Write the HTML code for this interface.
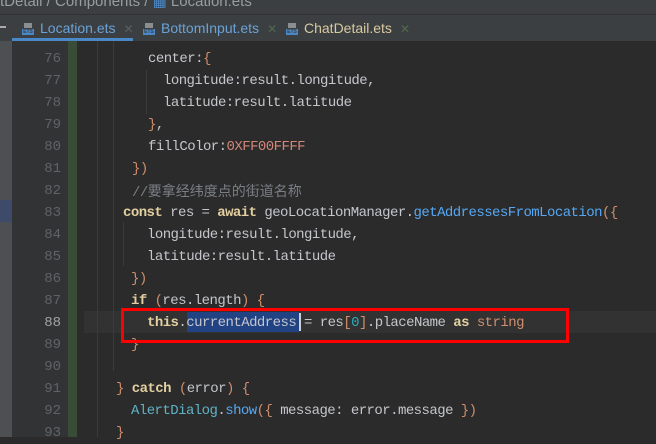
<!DOCTYPE html><html><head><meta charset="utf-8"><style>
body{margin:0;width:656px;height:437px;overflow:hidden;background:#2b2b2b;position:relative;font-family:"Liberation Sans",sans-serif}
.abs{position:absolute}
.crumb{left:0;top:0;width:656px;height:14px;background:#3c3f41;border-bottom:1px solid #323232;color:#9a9da0;font-size:15px;line-height:4px;white-space:nowrap;overflow:hidden}
.tabs{left:0;top:15px;width:656px;height:26px;background:#3c3f41}
.tab{top:0;height:26px;font-size:14px;line-height:27px;white-space:nowrap}
.ic{display:inline-block;width:12px;height:12px;vertical-align:-2px;margin-right:6px;position:relative}
.ic:before{content:"";position:absolute;left:2px;top:0;width:8px;height:5px;background:#8a8e91}
.ic:after{content:"ETS";position:absolute;left:0;top:6px;font-size:5px;line-height:6px;color:#3c3f41;background:#4a88c7;width:12px;text-align:center;font-weight:bold}
.x{color:#5a5e60;margin-left:8px;font-size:12px}
.gut{left:0;top:41px;width:12px;height:396px;background:#4d5052}
.ln{left:12px;top:41px;width:56px;height:396px;background:#313335}
.num{left:12px;width:49px;text-align:right;color:#606366;font-family:"Liberation Mono",monospace;font-size:14px;line-height:22px}
.green{left:68px;top:41px;width:9px;height:396px;background:#384c38}
.code{font-family:"Liberation Mono",monospace;font-size:14px;letter-spacing:-0.55px;line-height:22px;color:#c4c6cc;white-space:pre;left:0}
.k{color:#e3cf9f;font-weight:bold}.o{color:#cf8e6d}.f{color:#56a8f5}.n{color:#2aacb8}.c{color:#7a7e85}.h{color:#d3867a}
.cjk{font-family:"Liberation Sans","Noto Sans CJK SC",sans-serif;font-size:14px;letter-spacing:0}
.guide{width:1px;background:#3b3b3b}
</style></head><body>
<div class="abs crumb">tDetail / Components / <span style="color:#4a88c7">▦</span> Location.ets</div>
<div class="abs tabs">
 <div class="abs" style="left:0;top:11px;width:6px;height:2px;background:#aaa"></div>
 <div class="abs tab" style="left:22px;color:#6aa2d8"><span class="ic"></span>Location.ets<span class="x">✕</span></div>
 <div class="abs" style="left:12px;top:23px;width:121px;height:3px;background:#4a88c7"></div>
 <div class="abs tab" style="left:143px;color:#6aa2d8"><span class="ic"></span>BottomInput.ets<span class="x" style="color:#4f6a4f">✕</span></div>
 <div class="abs tab" style="left:286px;color:#d8c9a0"><span class="ic"></span>ChatDetail.ets<span class="x" style="color:#4f6a4f">✕</span></div>
</div>
<div class="abs gut"></div>
<div class="abs" style="left:0;top:200px;width:12px;height:22px;background:#3d4a6a"></div>
<div class="abs ln"></div>
<div class="abs green"></div>
<div class="abs" style="left:84px;top:311px;width:572px;height:22px;background:#323232"></div>
<div class="abs guide" style="left:97px;top:41px;height:396px"></div>
<div class="abs guide" style="left:113px;top:41px;height:330px"></div>
<div class="abs guide" style="left:146px;top:70px;height:44px"></div>
<div class="abs guide" style="left:123px;top:222px;height:44px"></div>
<div class="abs" style="left:187px;top:312px;width:112px;height:20px;background:#214283"></div>
<div class="abs" style="left:299px;top:313px;width:2px;height:18px;background:#ced0d6"></div>
<div class="abs code" style="top:48px"><span style="position:absolute;left:148px">center:<span class="o">{</span></span></div>
<div class="abs code" style="top:70px"><span style="position:absolute;left:163px">longitude:result.longitude,</span></div>
<div class="abs code" style="top:92px"><span style="position:absolute;left:163px">latitude:result.latitude</span></div>
<div class="abs code" style="top:114px"><span style="position:absolute;left:148px"><span class="o">}</span>,</span></div>
<div class="abs code" style="top:136px"><span style="position:absolute;left:148px">fillColor:<span class="h">0XFF00FFFF</span></span></div>
<div class="abs code" style="top:158px"><span style="position:absolute;left:132px"><span class="o">})</span></span></div>
<div class="abs code" style="top:180px"><span style="position:absolute;left:132px" class="c">//<span class="cjk">要拿经纬度点的街道名称</span></span></div>
<div class="abs code" style="top:202px"><span style="position:absolute;left:123px"><span class="k">const</span> res = <span class="k">await</span> geoLocationManager.<span class="f">getAddressesFromLocation</span><span class="o">({</span></span></div>
<div class="abs code" style="top:224px"><span style="position:absolute;left:147px">longitude:result.longitude,</span></div>
<div class="abs code" style="top:246px"><span style="position:absolute;left:147px">latitude:result.latitude</span></div>
<div class="abs code" style="top:268px"><span style="position:absolute;left:131px"><span class="o">})</span></span></div>
<div class="abs code" style="top:290px"><span style="position:absolute;left:131px"><span class="k">if</span> <span class="o">(</span>res.length<span class="o">)</span> <span class="o">{</span></span></div>
<div class="abs code" style="top:312px"><span style="position:absolute;left:147px"><span class="k">this</span>.currentAddress = res<span class="o">[</span><span class="n">0</span><span class="o">]</span>.placeName <span class="k">as</span> <span class="o">string</span></span></div>
<div class="abs code" style="top:334px"><span style="position:absolute;left:131px"><span class="o">}</span></span></div>
<div class="abs code" style="top:378px"><span style="position:absolute;left:116px"><span class="o">}</span> <span class="k">catch</span> <span class="o">(</span>error<span class="o">)</span> <span class="o">{</span></span></div>
<div class="abs code" style="top:400px"><span style="position:absolute;left:131px"><span style="color:#5fb3c7">AlertDialog</span>.<span class="f">show</span><span class="o">({</span> message: error.message <span class="o">})</span></span></div>
<div class="abs code" style="top:422px"><span style="position:absolute;left:116px"><span class="o">}</span></span></div>
<div class="abs" style="left:121px;top:308px;width:442px;height:29px;border:3px solid #f00"></div>
<div class="abs num" style="top:48px">76<br>77<br>78<br>79<br>80<br>81<br>82<br>83<br>84<br>85<br>86<br>87<br><span style="color:#a4a3a3">88</span><br>89<br>90<br>91<br>92<br>93</div>
</body></html>
